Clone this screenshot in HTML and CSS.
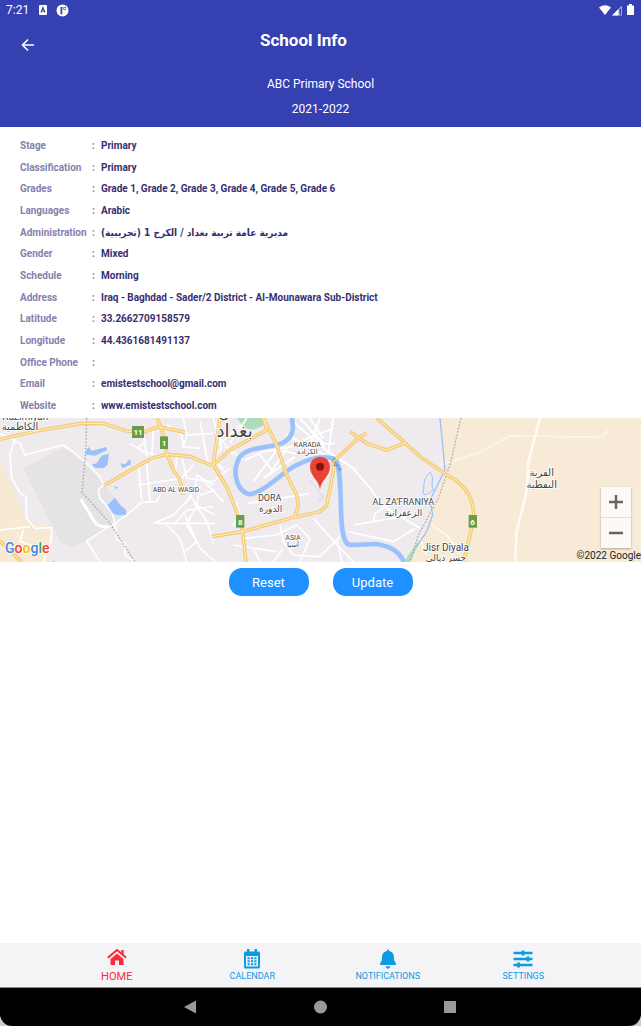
FILE: index.html
```html
<!DOCTYPE html>
<html lang="en">

<head>
    <meta charset="UTF-8">
    <meta name="viewport" content="width=device-width,initial-scale=1">
    <title>School Info</title>
    <link rel="stylesheet" href="styles.css">
</head>

<body>
    <div class="wrap">
        <header class="header">
            <div class="status_bar">
                <span class="time">7:21</span>
                <svg width="10" height="10" viewBox="0 0 10 10">
                    <rect x="1" y="0" width="8" height="10" rx="1" fill="#fff"/>
                    <path d="M3 7.5L5 2.5L7 7.5M3.8 6H6.2" fill="none" stroke="#3540b1" stroke-width="1.2"/>
                </svg>
                <svg class="app_icon" width="13" height="13" viewBox="0 0 13 13">
                    <circle cx="6.500" cy="6.500" r="6" fill="#fff"/>
                    <path d="M4.500 3H6.300V10.500A4.500 4.500 0 0 1 4.500 10ZM7.300 3H10V5.800H7.300Z" fill="#3540b1"/>
                    <circle cx="8.700" cy="4.300" r=".9" fill="#fff"/>
                </svg>
                <svg class="signal" width="36" height="12" viewBox="0 0 36 12">
                    <path d="M0 3.500Q6 -1 12 3.500L6 11Z" fill="#fff"/>
                    <path d="M13 11.500L23 1.500V11.500Z" fill="#fff" opacity=".55"/>
                    <path d="M13 11.500L19.500 5V11.500Z" fill="#fff"/>
                    <path d="M20.500 5.500L22 4V10.500H20.500Z" fill="#3540b1"/>
                    <path d="M28 1.500H30V0H33V1.500H35V11H28Z" fill="#fff"/>
                </svg>
            </div>
            <div class="title_bar">
                <button class="back" type="button" aria-label="Back">
                    <svg width="14" height="14" viewBox="0 0 14 14">
                        <path d="M13 7H2M7 1.500L1.500 7L7 12.500" fill="none" stroke="#fff" stroke-width="1.600"/>
                    </svg>
                </button>
                <h1>School Info</h1>
            </div>
            <p class="school">ABC Primary School</p>
            <p class="school">2021-2022</p>
        </header>

        <dl class="info">
            <div class="row"><dt>Stage</dt><dd>Primary</dd></div>
            <div class="row"><dt>Classification</dt><dd>Primary</dd></div>
            <div class="row"><dt>Grades</dt><dd>Grade 1, Grade 2, Grade 3, Grade 4, Grade 5, Grade 6</dd></div>
            <div class="row"><dt>Languages</dt><dd>Arabic</dd></div>
            <div class="row"><dt>Administration</dt><dd><bdi class="arabic" dir="rtl" lang="ar">مديرية عامة تربية بغداد / الكرخ 1 (تجريبية)</bdi></dd></div>
            <div class="row"><dt>Gender</dt><dd>Mixed</dd></div>
            <div class="row"><dt>Schedule</dt><dd>Morning</dd></div>
            <div class="row"><dt>Address</dt><dd>Iraq - Baghdad - Sader/2 District - Al-Mounawara Sub-District</dd></div>
            <div class="row"><dt>Latitude</dt><dd>33.2662709158579</dd></div>
            <div class="row"><dt>Longitude</dt><dd>44.4361681491137</dd></div>
            <div class="row"><dt>Office Phone</dt><dd></dd></div>
            <div class="row"><dt>Email</dt><dd>emistestschool@gmail.com</dd></div>
            <div class="row"><dt>Website</dt><dd>www.emistestschool.com</dd></div>
        </dl>

        <div class="map">
            <svg class="map_canvas" viewBox="0 9 1923 432" preserveAspectRatio="xMidYMid slice">
                <!-- land -->
                <rect y="9" width="1923" height="432" fill="#eeeaee"/>
                <path d="M70 160L188 98L250 130L322 225L392 295L330 340L220 397L180 380Z" fill="#e5e3e6"/>
                <path d="M0 140L40 220L75 310L155 340L150 441H0Z" fill="#f7e9d4"/>
                <path d="M1320 9H1923V441H1215L1235 405L1275 345L1300 270L1330 180Z" fill="#f7ead6"/>
                <path d="M710 9H785L795 30L760 44L735 40Z" fill="#aedcbb"/>
                <path d="M1212 441L1240 400L1258 375L1250 400L1230 441Z" fill="#aedcbb"/>

                <!-- local streets -->
                <g class="street">
                    <path d="M0 55L60 85L75 120L130 105L190 90L225 115L260 145L300 185L310 210L295 225L300 250L335 290L345 325L322 338L260 378L300 441"/>
                    <path d="M45 72L30 120L35 190L62 235L78 245L80 310L105 340L155 338L153 378L130 441M0 345L90 335M70 345L60 378L110 400"/>
                    <path d="M242 252L285 322Q295 337 325 335" stroke-width="9"/>
                    <path d="M345 325L350 375L375 385V420L405 441M345 325L380 300L425 262L470 260L480 240"/>
                    <path d="M390 85L430 110L470 120M430 60L440 125M460 45L455 145M410 100L440 80M415 150L425 255M440 145L450 262M415 210L545 190M530 125L525 185M545 125L560 190L640 200"/>
                    <path d="M550 10L560 60L640 55M560 65L550 95L600 100M600 20L625 150M580 150L545 190M500 30L545 60L550 95"/>
                    <path d="M470 325L645 325M460 325L520 300L560 260L585 220L590 180L640 210M500 330L540 370L560 441M555 300L600 400L645 440M570 240L620 320L640 380M520 330L560 285L640 275M600 215L590 270L560 330L590 380L555 410M605 190L670 260M600 240L645 225M580 265L645 300"/>
                    <path d="M640 9L665 100L640 130L675 170M655 90L720 30M645 50L700 120M690 85L740 10M700 110L730 135M640 200L690 160"/>
                    <path d="M735 135L790 110L900 90L1005 85M760 200L830 105L900 118M780 120L820 170M810 175L865 95M790 190L885 125M860 60L985 125M880 20L1005 130M900 10L975 90M930 10L970 70M960 10L930 90M910 75L1000 40M930 45L990 120M1000 9L985 110" stroke-width="6"/>
                    <path d="M985 110L1060 160L1085 190L1115 225L1145 270L1260 340" stroke-width="6"/>
                    <path d="M710 262L720 300L700 330M745 265L840 250L930 235M840 330L850 380L880 420L960 425L1020 365M730 370L830 360L890 330M940 310L1030 410L1060 441M850 400L820 441M890 330L930 370L900 441M1010 370L1025 441M1060 330L1120 320L1125 295L1165 270M1045 350L1180 380L1245 340M1120 320L1240 300M700 390L830 410M760 400L780 441"/>
                    <path d="M945 215L970 245L955 260M930 195L960 235" stroke="#e2dee5"/>
                    <path d="M1320 150L1440 112L1530 62L1680 65L1805 66L1828 42" stroke="#fcf5ea"/>
                    <path d="M1620 9L1585 140L1580 230L1550 350L1545 441" stroke-width="8" stroke="#fffaf4"/>
                    <path d="M1295 330L1340 360L1370 400M1260 375L1280 420" stroke="#fffaf4"/>
                </g>

                <!-- railway and district line -->
                <path class="rail" d="M260 9L258 100L246 232L330 325L405 441"/>
                <path class="rail" d="M1383 9L1350 150L1315 250L1255 360L1230 441"/>

                <!-- rivers -->
                <g class="water">
                    <path d="M875 9C885 50 875 70 845 85C800 102 750 92 720 125C690 175 715 232 750 238C800 228 840 175 890 150C930 130 970 120 1005 132C1025 150 1020 260 1025 325C1030 380 1040 390 1055 390L1130 387C1170 395 1195 405 1212 441"/>
                    <path d="M1320 9L1328 90L1335 165L1290 255L1298 300L1280 350L1250 395" stroke-width="4"/>
                    <path d="M1290 172C1265 195 1275 215 1268 235C1278 245 1290 230 1300 225C1290 205 1305 190 1290 172Z" stroke-width="3"/>
                </g>
                <g fill="#9ac1fb">
                    <path d="M265 95L275 108L318 96L322 105L285 122L255 118ZM276 148L290 145L305 122L327 116L322 150L310 160L284 158ZM361 145L375 148L390 132L393 148L367 160ZM322 270L345 248L362 272L378 285V300H350L338 295ZM342 213L354 218L348 222ZM160 436L166 441H160Z"/>
                </g>

                <!-- main roads -->
                <g class="road_edge">
                    <path id="r1" d="M0 73L120 46L240 26L310 25L380 48L430 52L475 35L555 52"/>
                    <path id="r2" d="M472 9L490 60L502 120L520 165L540 195L550 240"/>
                    <path id="r3" d="M312 212L400 160L460 128L500 118L570 125L645 155"/>
                    <path id="r4" d="M0 378L65 441"/>
                    <path id="r5" d="M660 9L645 110L640 150L680 215L710 290L728 350L738 441"/>
                    <path id="r6" d="M640 150L690 105L800 45L790 9"/>
                    <path id="r7" d="M790 9L830 90L860 180L890 240L895 270L885 305"/>
                    <path id="r8" d="M635 365L728 350L870 310L960 290L980 270L1000 170L1000 140L1080 65L1100 55"/>
                    <path id="r9" d="M1050 50L1100 85L1160 105L1215 85"/>
                    <path id="r10" d="M1130 9L1200 70L1260 125L1340 180C1400 210 1425 250 1420 320L1390 441"/>
                </g>
                <g class="road">
                    <use href="#r1"/><use href="#r2"/><use href="#r3"/><use href="#r4"/><use href="#r5"/>
                    <use href="#r6"/><use href="#r7"/><use href="#r8"/><use href="#r9"/><use href="#r10"/>
                </g>

                <!-- road numbers -->
                <g class="shield">
                    <rect x="396" y="33" width="36" height="36"/><text x="414" y="61">11</text>
                    <rect x="480" y="64" width="24" height="38"/><text x="492" y="93">1</text>
                    <rect x="708" y="300" width="25" height="38"/><text x="721" y="329">8</text>
                    <rect x="1406" y="300" width="25" height="38"/><text x="1418" y="329">6</text>
                </g>

                <!-- places -->
                <g class="place">
                    <text x="76" y="16" font-size="30">Kazimiyah</text>
                    <text x="60" y="46" font-size="30">الكاظمية</text>
                    <text x="528" y="231" font-size="21">ABD AL WASID</text>
                    <text x="704" y="66" font-size="54">بغداد</text>
                    <text x="672" y="9" font-size="45">ن</text>
                    <text x="922" y="95" font-size="21">KARADA</text>
                    <text x="922" y="118" font-size="21">الكرادة</text>
                    <text x="809" y="258" font-size="27">DORA</text>
                    <text x="812" y="290" font-size="27">الدورة</text>
                    <text x="879" y="374" font-size="21">ASIA</text>
                    <text x="879" y="397" font-size="21">آسيا</text>
                    <text x="1210" y="271" font-size="27">AL ZAʼFRANIYA</text>
                    <text x="1210" y="303" font-size="27">الزعفرانية</text>
                    <text x="1625" y="184" font-size="30">القرية</text>
                    <text x="1625" y="218" font-size="30">النفطية</text>
                    <text x="1338" y="408" font-size="30">Jisr Diyala</text>
                    <text x="1338" y="438" font-size="27">جسر ديالى</text>
                </g>
                <text class="river_name" transform="translate(991 134) rotate(52)">Tigris</text>

                <!-- marker -->
                <path d="M960 224C958 195 930 185 930 155A30 30 0 0 1 990 155C990 185 962 195 960 224Z" fill="#ea4335"/>
                <circle cx="960" cy="155" r="12" fill="#811411"/>

                <text class="logo" x="15" y="415"><tspan fill="#4285f4">G</tspan><tspan fill="#ea4335">o</tspan><tspan fill="#fbbc05">o</tspan><tspan fill="#4285f4">g</tspan><tspan fill="#34a853">l</tspan><tspan fill="#ea4335">e</tspan></text>
            </svg>
            <div class="zoom">
                <button type="button" aria-label="Zoom in">
                    <svg width="14" height="14" viewBox="0 0 14 14"><path d="M0 7H14M7 0V14" stroke="#666" stroke-width="2.500"/></svg>
                </button>
                <button type="button" aria-label="Zoom out">
                    <svg width="14" height="14" viewBox="0 0 14 14"><path d="M0 7H14" stroke="#666" stroke-width="2.500"/></svg>
                </button>
            </div>
            <span class="copyright">©2022 Google</span>
        </div>

        <div class="actions">
            <button type="button">Reset</button>
            <button type="button">Update</button>
        </div>

        <nav class="tabs">
            <a class="tab active" href="#">
                <svg width="20" height="20" viewBox="0 0 20 20">
                    <path d="M10 4.500L16.500 10V15.500Q16.500 16 16 16H12V11.500H8V16H4Q3.500 16 3.500 15.500V10Z" fill="currentColor"/>
                    <path d="M.8 8.700L10 1L19.200 8.700" fill="none" stroke="currentColor" stroke-width="2"/>
                    <path d="M14.300 1H16.700V6.200L14.300 4.200Z" fill="currentColor"/>
                </svg>
                <span>HOME</span>
            </a>
            <a class="tab" href="#">
                <svg width="18" height="20" viewBox="0 0 18 20">
                    <path d="M2.500 2.500H4V0H6.500V2.500H11.500V0H14V2.500H15.500Q17 2.500 17 4V18Q17 19.500 15.500 19.500H2.500Q1 19.500 1 18V4Q1 2.500 2.500 2.500ZM3 7V17.500H15V7Z" fill="currentColor" fill-rule="evenodd"/>
                    <path d="M4.500 9.300H13.500M4.500 12.300H13.500M4.500 15.300H13.500" stroke="currentColor" stroke-width="2" stroke-dasharray="2.200 1.200"/>
                </svg>
                <span>CALENDAR</span>
            </a>
            <a class="tab" href="#">
                <svg width="18" height="20" viewBox="0 0 18 20">
                    <path d="M8 2V1Q9 -.2 10 1V2C14 3 15 5.500 15 9C15 12 16 13 17 14.500Q17.300 16 16 16H2Q.7 16 1 14.500C2 13 3 12 3 9C3 5.500 4 3 8 2ZM6.500 17.300H11.500Q11 19.700 9 19.700Q7 19.700 6.500 17.300Z" fill="currentColor"/>
                </svg>
                <span>NOTIFICATIONS</span>
            </a>
            <a class="tab" href="#">
                <svg width="20" height="20" viewBox="0 0 20 20">
                    <path d="M.5 4H19.500M.5 10H19.500M.5 16H19.500" stroke="currentColor" stroke-width="2.400"/>
                    <path d="M10 1.500V6.500M15 7.500V12.500M5.500 13.500V18.500" stroke="currentColor" stroke-width="2.800"/>
                </svg>
                <span>SETTINGS</span>
            </a>
        </nav>

        <div class="system_nav">
            <div class="system_keys">
                <svg width="14" height="14" viewBox="0 0 14 14"><path d="M0 7L12 .5V13.500Z" fill="#999"/></svg>
                <svg width="14" height="14" viewBox="0 0 14 14"><circle cx="6.500" cy="7" r="6.500" fill="#999"/></svg>
                <svg width="14" height="14" viewBox="0 0 14 14"><rect x="0" y="1" width="12" height="12" fill="#999"/></svg>
            </div>
        </div>
    </div>
</body>

</html>
```

FILE: styles.css
```css
* {
    margin: 0;
    padding: 0;
    box-sizing: border-box;
}

body {
    font-family: Roboto, "DejaVu Sans", sans-serif;
    background: #fff;
    color: #352f70;
}

button {
    border: 0;
    font-family: inherit;
    cursor: pointer;
}

svg {
    display: block;
}

.wrap {
    min-height: 100vh;
    display: flex;
    flex-direction: column;
}

.header {
    background: #3540b1;
    color: #fff;
    padding-bottom: 5px;
}

.status_bar {
    height: 20px;
    padding: 0 6px;
    display: flex;
    align-items: center;
}

.time {
    width: 32px;
    font-size: 12px;
    line-height: 20px;
}

.app_icon {
    margin-left: 8px;
}

.signal {
    margin-left: auto;
}

.title_bar {
    height: 52px;
    padding: 0 17px;
    display: flex;
}

.back {
    width: 22px;
    height: 50px;
    display: flex;
    align-items: center;
    justify-content: center;
    background: none;
}

.title_bar h1 {
    flex: 1;
    padding-right: 56px;
    font-size: 17px;
    line-height: 40px;
    text-align: center;
}

.school {
    font-size: 12px;
    line-height: 25px;
    text-align: center;
}

.info {
    min-height: 291px;
    padding: 8px 20px 1px;
    display: grid;
    grid-auto-rows: 1fr;
}

.row {
    display: flex;
    align-items: center;
    font-size: 10px;
    font-weight: 700;
    line-height: 20px;
}

.row dt {
    width: 81px;
    display: flex;
    color: #8680ad;
}

.row dt::after {
    content: ":";
    width: 9px;
    margin-left: auto;
}

.row dd {
    flex: 1;
}

.arabic {
    font-family: "DejaVu Sans Condensed", "DejaVu Sans", sans-serif;
}

.map {
    position: relative;
    height: 144px;
}

.map_canvas {
    width: 100%;
    height: 100%;
}

.street {
    fill: none;
    stroke: #fff;
    stroke-width: 5;
}

.rail {
    fill: none;
    stroke: #aaa;
    stroke-width: 4;
    stroke-dasharray: 5 5;
}

.water {
    fill: none;
    stroke: #9ac1fb;
    stroke-width: 14;
}

.road_edge {
    fill: none;
    stroke: #f4cc78;
    stroke-width: 11;
}

.road {
    fill: none;
    stroke-width: 3;
}

.road use {
    stroke: #fff0bd;
}

.shield {
    fill: #689f45;
    font-size: 24px;
    font-weight: 700;
    text-anchor: middle;
}

.shield text {
    fill: #fff;
}

.place {
    fill: #444;
    stroke: #fff;
    stroke-width: 5;
    paint-order: stroke;
    text-anchor: middle;
}

.river_name {
    fill: #3f76c4;
    font-size: 18px;
}

.logo {
    font-size: 42px;
    font-weight: 500;
    stroke: #fff;
    stroke-width: 4;
    paint-order: stroke;
}

.zoom {
    position: absolute;
    right: 10px;
    bottom: 14px;
    width: 30px;
    display: grid;
    gap: 1px;
    background: #ddd;
    box-shadow: 0 1px 2px rgba(0, 0, 0, .3);
}

.zoom button {
    height: 30px;
    display: flex;
    align-items: center;
    justify-content: center;
    background: #fdfaf5;
}

.copyright {
    position: absolute;
    right: 0;
    bottom: 0;
    font-size: 10px;
    line-height: 12px;
    color: #222;
}

.actions {
    padding-top: 6px;
    display: flex;
    justify-content: center;
    gap: 24px;
}

.actions button {
    width: 80px;
    height: 28px;
    border-radius: 13px;
    background: #1e90ff;
    color: #fff;
    font-size: 13px;
}

.tabs {
    margin-top: auto;
    height: 45px;
    padding: 6px 50px 0 49px;
    display: flex;
    background: #f4f4f7;
    border-bottom: 1px solid #888;
}

.tab {
    flex: 1;
    display: flex;
    flex-direction: column;
    align-items: center;
    color: #0a9be3;
    font-size: 9px;
    line-height: 15px;
    text-decoration: none;
}

.tab.active {
    color: #fb2a3c;
    font-size: 11px;
}

.system_nav {
    background: #ccc;
}

.system_keys {
    height: 38px;
    display: flex;
    align-items: center;
    justify-content: center;
    gap: 116px;
    background: #000;
    border-radius: 0 0 12px 12px;
}
```
